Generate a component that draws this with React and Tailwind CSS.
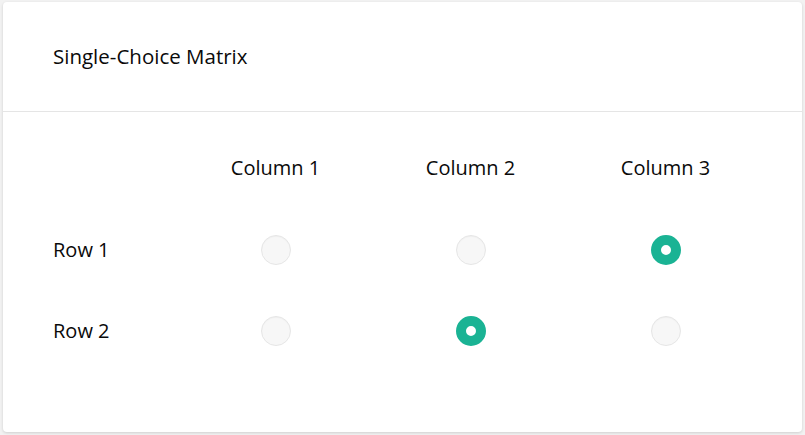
const columns = ["Column 1", "Column 2", "Column 3"];
const rows = [
  { label: "Row 1", selected: 2 },
  { label: "Row 2", selected: 1 },
];

const Radio = ({ checked }) =>
  checked ? (
    <span className="block w-[30px] h-[30px] rounded-full border-[10px] border-[#1ab394] bg-white" />
  ) : (
    <span className="block w-[30px] h-[30px] rounded-full border border-[#e6e6e6] bg-[#f7f7f7] shadow-[inset_0_1px_1px_rgba(0,0,0,0.03)]" />
  );

export default function App() {
  return (
    <div
      className="w-[805px] h-[435px] bg-[#f2f2f2] pt-[2px] pl-[3px] pr-[3px] pb-[3px]"
      style={{ fontFamily: '"Open Sans", sans-serif' }}
    >
      <div className="h-full bg-white rounded-[4px] shadow-[0_1px_3px_rgba(0,0,0,0.15)] flex flex-col">
        <div className="h-[110px] border-b border-[#e5e5e5] flex items-center pl-[50px]">
          <span className="text-[20.5px] font-medium text-[#0a0a0a]">Single-Choice Matrix</span>
        </div>
        <div className="pl-[50px] pt-[40px]">
          <div className="flex h-[32px] items-center">
            <div className="w-[125px]" />
            {columns.map((c) => (
              <div key={c} className="w-[195px] text-center text-[20px] font-medium text-[#0a0a0a]">
                {c}
              </div>
            ))}
          </div>
          {rows.map((r, i) => (
            <div key={r.label} className={`flex items-center h-[32px] ${i === 0 ? "mt-[50px]" : "mt-[49px]"}`}>
              <div className="w-[125px] text-[20px] font-medium text-[#0a0a0a]">{r.label}</div>
              {columns.map((c, j) => (
                <div key={c} className="w-[195px] flex justify-center">
                  <Radio checked={r.selected === j} />
                </div>
              ))}
            </div>
          ))}
        </div>
      </div>
    </div>
  );
}
